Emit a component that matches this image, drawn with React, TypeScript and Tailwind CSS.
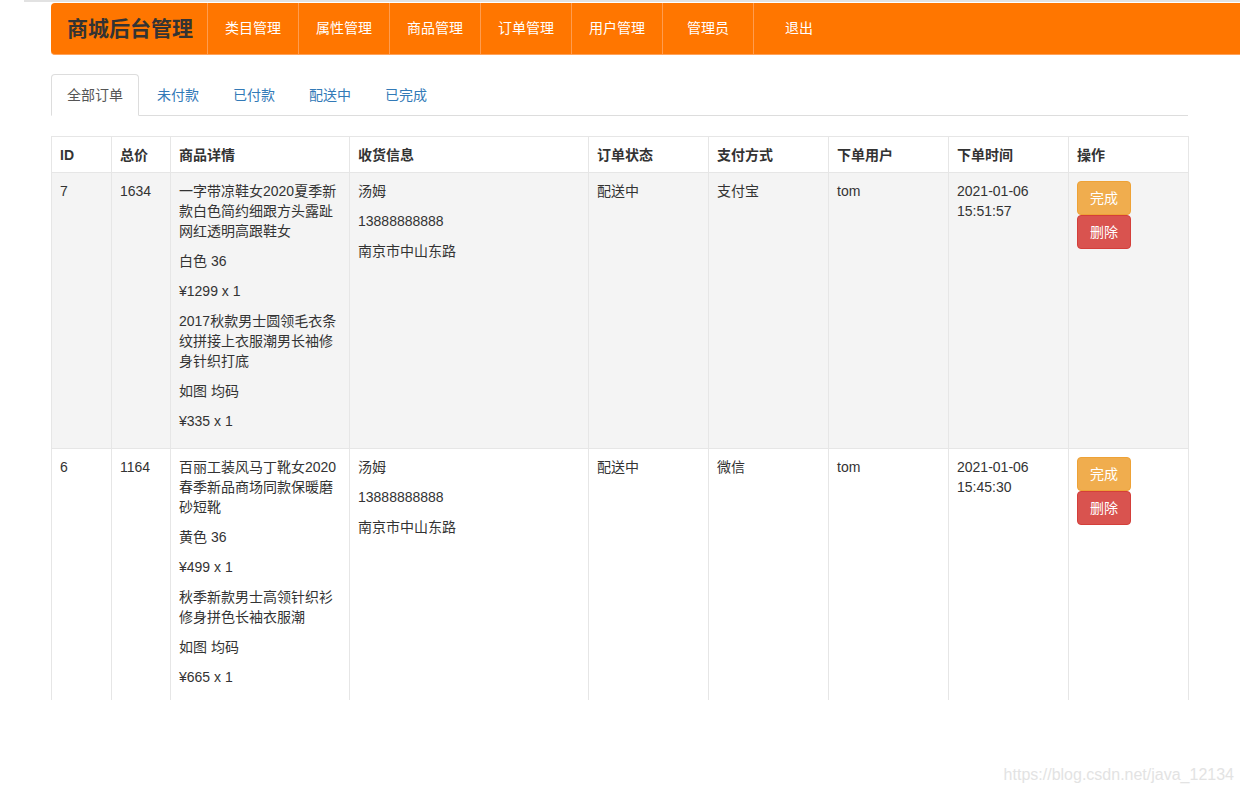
import React from 'react';

interface OrderItem {
  name: string;
  spec: string;
  price: string;
}

interface Order {
  id: number;
  total: number;
  items: OrderItem[];
  receiver: string;
  phone: string;
  address: string;
  status: string;
  pay: string;
  user: string;
  date: string;
  time: string;
}

const navItems = ['类目管理', '属性管理', '商品管理', '订单管理', '用户管理', '管理员', '退出'];
const tabs = ['全部订单', '未付款', '已付款', '配送中', '已完成'];

const orders: Order[] = [
  {
    id: 7,
    total: 1634,
    items: [
      { name: '一字带凉鞋女2020夏季新款白色简约细跟方头露趾网红透明高跟鞋女', spec: '白色 36', price: '¥1299 x 1' },
      { name: '2017秋款男士圆领毛衣条纹拼接上衣服潮男长袖修身针织打底', spec: '如图 均码', price: '¥335 x 1' },
    ],
    receiver: '汤姆',
    phone: '13888888888',
    address: '南京市中山东路',
    status: '配送中',
    pay: '支付宝',
    user: 'tom',
    date: '2021-01-06',
    time: '15:51:57',
  },
  {
    id: 6,
    total: 1164,
    items: [
      { name: '百丽工装风马丁靴女2020春季新品商场同款保暖磨砂短靴', spec: '黄色 36', price: '¥499 x 1' },
      { name: '秋季新款男士高领针织衫修身拼色长袖衣服潮', spec: '如图 均码', price: '¥665 x 1' },
    ],
    receiver: '汤姆',
    phone: '13888888888',
    address: '南京市中山东路',
    status: '配送中',
    pay: '微信',
    user: 'tom',
    date: '2021-01-06',
    time: '15:45:30',
  },
];

const headers = ['ID', '总价', '商品详情', '收货信息', '订单状态', '支付方式', '下单用户', '下单时间', '操作'];
const colWidths = [60, 59, 179, 239, 120, 120, 120, 120, 120];

// 표 셀 공통 스타일
const cell = 'border border-[#e6e6e6] px-2 pt-2 pb-[7px] align-top leading-5';

export default function App() {
  return (
    <div
      className="relative h-[795px] w-full overflow-hidden bg-white text-[14px] text-[#333]"
      style={{ fontFamily: '"Liberation Sans", Arial, "Noto Sans CJK SC", sans-serif' }}
    >
      {/* top strip */}
      <div className="ml-[24px] mr-[4px] h-[2px] bg-[#e2e2e2]" />

      {/* navbar */}
      <div className="ml-[51px] mr-[4px] mt-px flex h-[52px] items-stretch rounded-l-[4px] border-b border-[#ffa25a] bg-[#ff7600]">
        <div className="flex items-center pl-[16px] pr-[14px] text-[21px] font-bold text-[#333]">商城后台管理</div>
        {navItems.map((n) => (
          <div key={n} className="flex w-[91px] items-center justify-center border-l border-[#ff9c4f] text-white">
            {n}
          </div>
        ))}
      </div>

      <div className="ml-[51px] w-[1140px]">
        {/* tabs */}
        <ul className="mt-[19px] mr-[3px] flex border-b border-[#ddd]">
          {tabs.map((t, i) => (
            <li key={t} className="-mb-px mr-[2px]">
              <span
                className={
                  i === 0
                    ? 'block rounded-t-[4px] border border-[#ddd] border-b-white bg-white px-[15px] py-[10px] leading-5 text-[#555]'
                    : 'block rounded-t-[4px] border border-transparent px-[15px] py-[10px] leading-5 text-[#337ab7]'
                }
              >
                {t}
              </span>
            </li>
          ))}
        </ul>

        {/* table */}
        <div className="mt-[20px] h-[564px] overflow-hidden">
          <table className="w-[1137px] table-fixed border-collapse">
            <colgroup>
              {colWidths.map((w, i) => (
                <col key={i} style={{ width: w }} />
              ))}
            </colgroup>
            <thead>
              <tr>
                {headers.map((h) => (
                  <th key={h} className={`${cell} text-left font-bold`}>
                    {h}
                  </th>
                ))}
              </tr>
            </thead>
            <tbody>
              {orders.map((o, idx) => (
                <tr key={o.id} className={idx === 0 ? 'bg-[#f4f4f4]' : 'bg-white'}>
                  <td className={cell}>{o.id}</td>
                  <td className={cell}>{o.total}</td>
                  <td className={cell}>
                    {o.items.map((it) => (
                      <React.Fragment key={it.name}>
                        <p className="mb-[10px]">{it.name}</p>
                        <p className="mb-[10px]">{it.spec}</p>
                        <p className="mb-[10px]">{it.price}</p>
                      </React.Fragment>
                    ))}
                  </td>
                  <td className={cell}>
                    <p className="mb-[10px]">{o.receiver}</p>
                    <p className="mb-[10px]">{o.phone}</p>
                    <p className="mb-[10px]">{o.address}</p>
                  </td>
                  <td className={cell}>{o.status}</td>
                  <td className={cell}>{o.pay}</td>
                  <td className={cell}>{o.user}</td>
                  <td className={cell}>
                    {o.date}
                    <br />
                    {o.time}
                  </td>
                  <td className={cell}>
                    <div className="flex flex-col items-start">
                      <button className="rounded-[4px] border border-[#eea236] bg-[#f0ad4e] px-[12px] py-[6px] leading-5 text-white">
                        完成
                      </button>
                      <button className="rounded-[4px] border border-[#d43f3a] bg-[#d9534f] px-[12px] py-[6px] leading-5 text-white">
                        删除
                      </button>
                    </div>
                  </td>
                </tr>
              ))}
            </tbody>
          </table>
        </div>
      </div>

      {/* watermark */}
      <div className="absolute bottom-[8px] right-[10px] text-[16px] text-[#e3e3e3]">https://blog.csdn.net/java_12134</div>
    </div>
  );
}
